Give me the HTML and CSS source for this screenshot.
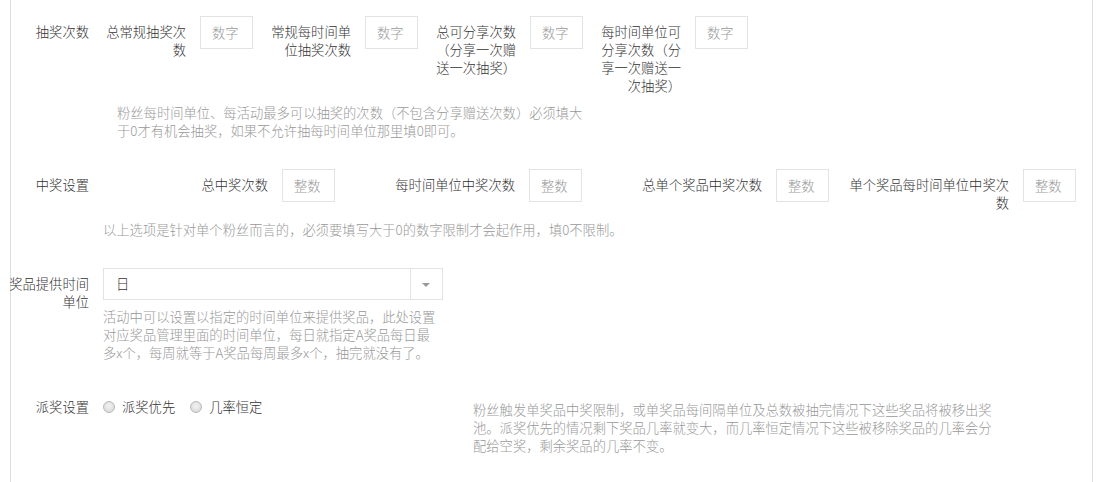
FILE: index.html
```html
<!DOCTYPE html>
<html lang="zh-CN">
<head>
<meta charset="UTF-8">
<title>抽奖设置</title>
<link rel="stylesheet" href="styles.css">
</head>
<body>

<div class="page">

    <div class="form-row">
        <div class="row-label">抽奖次数</div>
        <div class="row-body">
            <div class="field-line">
                <div class="field">
                    <label class="field-label small">总常规抽奖次数</label>
                    <input type="text" class="num-input" placeholder="数字">
                </div>
                <div class="field">
                    <label class="field-label small">常规每时间单位抽奖次数</label>
                    <input type="text" class="num-input" placeholder="数字">
                </div>
                <div class="field">
                    <label class="field-label small">总可分享次数（分享一次赠送一次抽奖）</label>
                    <input type="text" class="num-input" placeholder="数字">
                </div>
                <div class="field">
                    <label class="field-label small">每时间单位可分享次数（分享一次赠送一次抽奖）</label>
                    <input type="text" class="num-input" placeholder="数字">
                </div>
            </div>
            <p class="help help-indent">粉丝每时间单位、每活动最多可以抽奖的次数（不包含分享赠送次数）必须填大于0才有机会抽奖，如果不允许抽每时间单位那里填0即可。</p>
        </div>
    </div>

    <div class="form-row">
        <div class="row-label">中奖设置</div>
        <div class="row-body">
            <div class="field-line">
                <div class="field">
                    <label class="field-label wide">总中奖次数</label>
                    <input type="text" class="num-input" placeholder="整数">
                </div>
                <div class="field">
                    <label class="field-label wide">每时间单位中奖次数</label>
                    <input type="text" class="num-input" placeholder="整数">
                </div>
                <div class="field">
                    <label class="field-label wide">总单个奖品中奖次数</label>
                    <input type="text" class="num-input" placeholder="整数">
                </div>
                <div class="field">
                    <label class="field-label wide">单个奖品每时间单位中奖次数</label>
                    <input type="text" class="num-input" placeholder="整数">
                </div>
            </div>
            <p class="help">以上选项是针对单个粉丝而言的，必须要填写大于0的数字限制才会起作用，填0不限制。</p>
        </div>
    </div>

    <div class="form-row">
        <div class="row-label">奖品提供时间单位</div>
        <div class="row-body control-col">
            <div class="select-box">
                <span class="select-value">日</span>
                <span class="select-arrow"></span>
            </div>
            <p class="help help-tight">活动中可以设置以指定的时间单位来提供奖品，此处设置对应奖品管理里面的时间单位，每日就指定A奖品每日最多x个，每周就等于A奖品每周最多x个，抽完就没有了。</p>
        </div>
    </div>

    <div class="form-row">
        <div class="row-label">派奖设置</div>
        <div class="row-body control-col radio-line">
            <label class="radio-option"><span class="radio-dot"></span>派奖优先</label>
            <label class="radio-option"><span class="radio-dot"></span>几率恒定</label>
        </div>
        <p class="help help-side">粉丝触发单奖品中奖限制，或单奖品每间隔单位及总数被抽完情况下这些奖品将被移出奖池。派奖优先的情况剩下奖品几率就变大，而几率恒定情况下这些被移除奖品的几率会分配给空奖，剩余奖品的几率不变。</p>
    </div>

</div>

</body>
</html>
```

FILE: styles.css
```css
body {
    margin: 0;
    padding: 0;
    background-color: #ffffff;
    font-family: "Noto Sans CJK SC", "Liberation Sans", sans-serif;
    font-size: 13.3px;
    font-weight: 300;
    line-height: 18px;
    color: #333;
    text-spacing-trim: space-all;
}

.page {
    box-sizing: border-box;
    width: 1083px;
    min-height: 100vh;
    margin-left: 10px;
    padding-top: 16px;
    border-left: 1px solid #dedede;
    border-right: 1px solid #dedede;
}

.form-row {
    display: flex;
    align-items: flex-start;
    margin-bottom: 29px;
}

.row-label {
    width: 80px;
    margin-left: -2px;
    padding-top: 7px;
    text-align: right;
    flex-shrink: 0;
}

.row-body {
    margin-left: 14px;
}

.field-line {
    display: flex;
    align-items: flex-start;
}

.field {
    display: flex;
    align-items: flex-start;
    margin-right: 15px;
}

.field-label {
    padding-top: 7px;
    text-align: right;
}

.field-label.small {
    width: 83px;
}

.field-label.wide {
    width: 165px;
}

.num-input {
    box-sizing: border-box;
    width: 53px;
    height: 33px;
    margin-left: 14px;
    padding: 0 11px;
    border: 1px solid #e3e3e3;
    border-radius: 0;
    font-family: inherit;
    font-size: 13.3px;
    font-weight: 300;
    color: #333;
    outline: none;
}

.num-input::placeholder {
    color: #999;
}

.help {
    margin: 9px 0 0 0;
    color: #999;
}

.help-indent {
    width: 470px;
    margin-left: 14px;
}

.help-tight {
    margin-top: 8px;
}

.control-col {
    width: 340px;
}

/* select */
.select-box {
    box-sizing: border-box;
    display: flex;
    align-items: center;
    height: 32px;
    border: 1px solid #e3e3e3;
}

.select-value {
    flex: 1;
    padding-left: 12px;
}

.select-arrow {
    position: relative;
    width: 31px;
    height: 100%;
    border-left: 1px solid #e3e3e3;
}

.select-arrow::after {
    content: "";
    position: absolute;
    left: 11px;
    top: 14px;
    border-left: 4px solid transparent;
    border-right: 4px solid transparent;
    border-top: 4px solid #999;
}

/* radios */
.radio-line {
    display: flex;
    padding-top: 7px;
}

.radio-option {
    display: flex;
    align-items: center;
    margin-right: 15px;
}

.radio-dot {
    box-sizing: border-box;
    width: 12px;
    height: 12px;
    margin-right: 7px;
    border: 1px solid #b9b9b9;
    border-radius: 50%;
    background: radial-gradient(circle at 50% 40%, #f2f2f2, #d4d4d4);
}

.help-side {
    width: 525px;
    margin: 0 0 0 30px;
    padding-top: 10px;
}
```
